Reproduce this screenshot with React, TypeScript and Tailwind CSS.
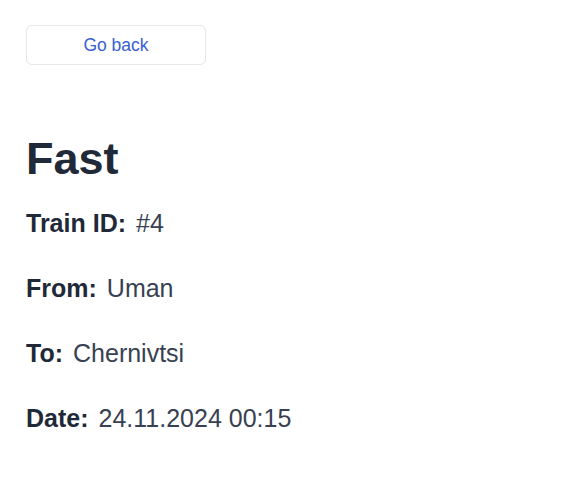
import React from 'react';

const rows = [
  { label: 'Train ID:', value: '#4' },
  { label: 'From:', value: 'Uman' },
  { label: 'To:', value: 'Chernivtsi' },
  { label: 'Date:', value: '24.11.2024 00:15' },
];

export default function App() {
  return (
    <div className="min-h-screen bg-white px-[26px] pt-[25px] font-['Liberation_Sans',Arial,sans-serif] text-[#1f2937]">
      <button className="flex h-[40px] w-[180px] items-center justify-center rounded-md border border-[#e5e7eb] bg-white text-[17.5px] text-[#3760d2]">
        Go back
      </button>

      <h1 className="mt-[71px] text-[45px] font-bold leading-[45px]">Fast</h1>

      <div className="mt-[30px] flex flex-col gap-[40px]">
        {rows.map((r) => (
          <div key={r.label} className="flex items-baseline gap-[10px] text-[25px] leading-[25px]">
            <span className="font-bold">{r.label}</span>
            <span className="text-[#374151]">{r.value}</span>
          </div>
        ))}
      </div>
    </div>
  );
}
